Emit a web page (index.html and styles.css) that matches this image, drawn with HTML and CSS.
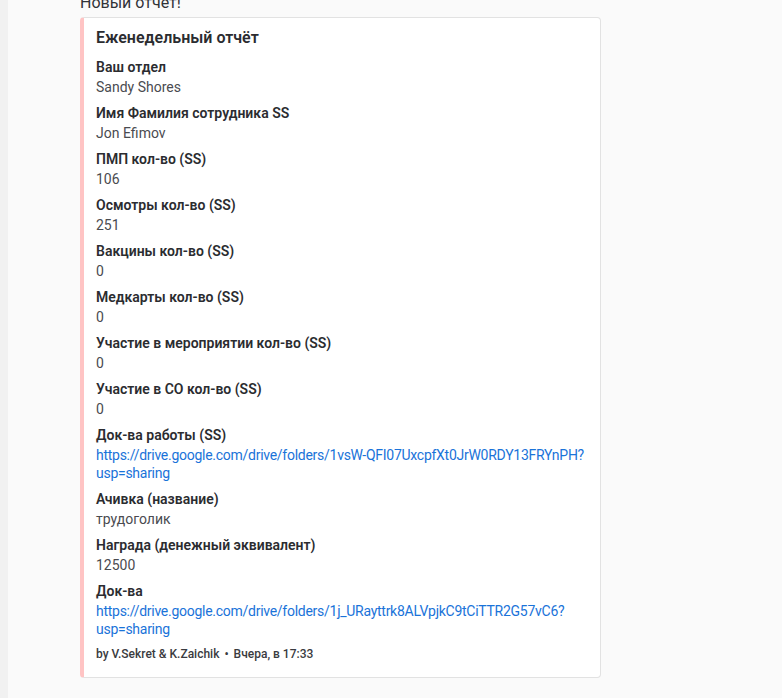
FILE: index.html
```html
<!DOCTYPE html>
<html lang="ru">
<head>
<meta charset="utf-8">
<title>Новый отчет</title>
<link rel="stylesheet" href="styles.css">
</head>
<body>
<div class="app">
  <div class="edge"></div>
  <main class="chat">
    <div class="message">
      <div class="content">Новый отчет!</div>
      <article class="embed">
        <div class="embed-title">Еженедельный отчёт</div>
        <div class="fields">
          <div class="field"><div class="fname">Ваш отдел</div><div class="fvalue">Sandy Shores</div></div>
          <div class="field"><div class="fname">Имя Фамилия сотрудника SS</div><div class="fvalue">Jon Efimov</div></div>
          <div class="field"><div class="fname">ПМП кол-во (SS)</div><div class="fvalue">106</div></div>
          <div class="field"><div class="fname">Осмотры кол-во (SS)</div><div class="fvalue">251</div></div>
          <div class="field"><div class="fname">Вакцины кол-во (SS)</div><div class="fvalue">0</div></div>
          <div class="field"><div class="fname">Медкарты кол-во (SS)</div><div class="fvalue">0</div></div>
          <div class="field"><div class="fname">Участие в мероприятии кол-во (SS)</div><div class="fvalue">0</div></div>
          <div class="field"><div class="fname">Участие в СО кол-во (SS)</div><div class="fvalue">0</div></div>
          <div class="field"><div class="fname">Док-ва работы (SS)</div><div class="fvalue"><a class="link" href="#">https://drive.google.com/drive/folders/1vsW-QFI07UxcpfXt0JrW0RDY13FRYnPH?<br>usp=sharing</a></div></div>
          <div class="field"><div class="fname">Ачивка (название)</div><div class="fvalue">трудоголик</div></div>
          <div class="field"><div class="fname">Награда (денежный эквивалент)</div><div class="fvalue">12500</div></div>
          <div class="field"><div class="fname">Док-ва</div><div class="fvalue"><a class="link" href="#">https://drive.google.com/drive/folders/1j_URayttrk8ALVpjkC9tCiTTR2G57vC6?<br>usp=sharing</a></div></div>
        </div>
        <div class="footer">by V.Sekret &amp; K.Zaichik <span class="dot">•</span> Вчера, в 17:33</div>
      </article>
    </div>
  </main>
</div>
</body>
</html>
```

FILE: styles.css
```css
* { box-sizing: border-box; }
html, body { margin: 0; height: 100%; }
body {
  font-family: Roboto, "Noto Sans", sans-serif;
  background: #fafafa;
  color: #313338;
  overflow: hidden;
}
.app { display: flex; height: 100%; }
.edge { width: 8px; background: #f1f1f1; flex: none; }
.chat { flex: 1; padding-left: 72px; }
.message { margin-top: -8px; }
.content {
  font-size: 16px;
  line-height: 22px;
  color: #313338;
}
.embed {
  margin-top: 3px;
  width: 521px;
  background: #ffffff;
  border: 1px solid #e2e2e2;
  border-left: 4px solid #ffc4c4;
  border-radius: 4px;
  padding: 8px 16px 15px 12px;
}
.embed-title {
  font-size: 16px;
  line-height: 22px;
  font-weight: 600;
  color: #2b2c30;
  margin-top: 1px;
}
.fields {
  margin-top: 9px;
  display: flex;
  flex-direction: column;
  gap: 8px;
}
.fname {
  font-size: 14px;
  line-height: 18px;
  font-weight: 600;
  color: #2b2c30;
  margin-bottom: 2px;
}
.fvalue {
  font-size: 14px;
  line-height: 18px;
  color: #4a4b50;
}
.link { color: #1a73d9; text-decoration: none; white-space: nowrap; letter-spacing: -0.27px; }
.footer {
  margin-top: 8px;
  font-size: 12px;
  line-height: 16px;
  font-weight: 500;
  color: #3a3b40;
}
.dot { margin: 0 2px; }
```
